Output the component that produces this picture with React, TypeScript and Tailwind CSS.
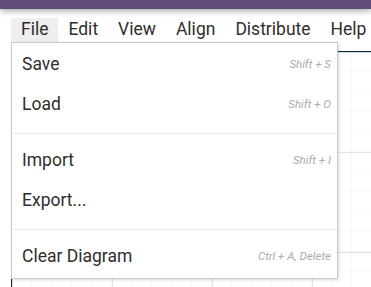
import { Fragment } from 'react'

const MENUS = ['File', 'Edit', 'View', 'Align', 'Distribute', 'Help']

type Item = { label: string; shortcut?: string } | 'sep'

const FILE_ITEMS: Item[] = [
  { label: 'Save', shortcut: 'Shift + S' },
  { label: 'Load', shortcut: 'Shift + O' },
  'sep',
  { label: 'Import', shortcut: 'Shift + I' },
  { label: 'Export...' },
  'sep',
  { label: 'Clear Diagram', shortcut: 'Ctrl + A, Delete' },
]

function Grid() {
  return (
    <svg className="absolute inset-0 h-full w-full" xmlns="http://www.w3.org/2000/svg">
      <defs>
        <pattern id="minor" width="20" height="20" patternUnits="userSpaceOnUse">
          <path d="M20 0V20M0 20H20" fill="none" stroke="#efeffa" strokeWidth="1" />
        </pattern>
        <pattern id="major" width="100" height="100" patternUnits="userSpaceOnUse">
          <rect width="100" height="100" fill="url(#minor)" />
          <path d="M0 0.5H100M0.5 0V100" fill="none" stroke="#e2e2ee" strokeWidth="1" />
        </pattern>
      </defs>
      <rect width="100%" height="100%" fill="url(#major)" />
      <path d="M0 0.5H2000" stroke="#bfe0f4" strokeWidth="1" />
    </svg>
  )
}

export default function App() {
  return (
    <div className="relative h-[287px] w-[371px] overflow-hidden bg-white font-['Roboto',sans-serif] text-[#2e2e2e]">
      <div className="relative z-10 h-[9px] bg-[#634b7b] shadow-[0_2px_6px_rgba(0,0,0,0.35)]" />

      <div className="flex h-[33px] items-end pl-[11px]">
        {MENUS.map(m => (
          <div
            key={m}
            className={`flex h-[24px] items-center px-[10px] text-[17.5px] leading-none ${m === 'File' ? 'bg-[#eeeeee]' : ''}`}
          >
            {m}
          </div>
        ))}
      </div>

      <div className="relative ml-[11px] mt-[9px] h-[240px] border-l border-t border-[#222]">
        <Grid />
      </div>

      <div className="absolute left-[11px] top-[42px] z-20 w-[327px] border border-[#c9c9c9] bg-white pb-[1px] pt-[2px] shadow-[1px_1px_3px_rgba(0,0,0,0.15)]">
        {FILE_ITEMS.map((it, i) =>
          it === 'sep' ? (
            <div key={i} className="my-[7.5px] h-px bg-[#e9e9e9]" />
          ) : (
            <Fragment key={i}>
              <div className="flex h-[40px] items-center justify-between pl-[10px] pr-[6px]">
                <span className="text-[17.5px] leading-none">{it.label}</span>
                {it.shortcut && (
                  <span className="text-[11.5px] italic leading-none text-[#ababab]">{it.shortcut}</span>
                )}
              </div>
            </Fragment>
          )
        )}
      </div>
    </div>
  )
}
